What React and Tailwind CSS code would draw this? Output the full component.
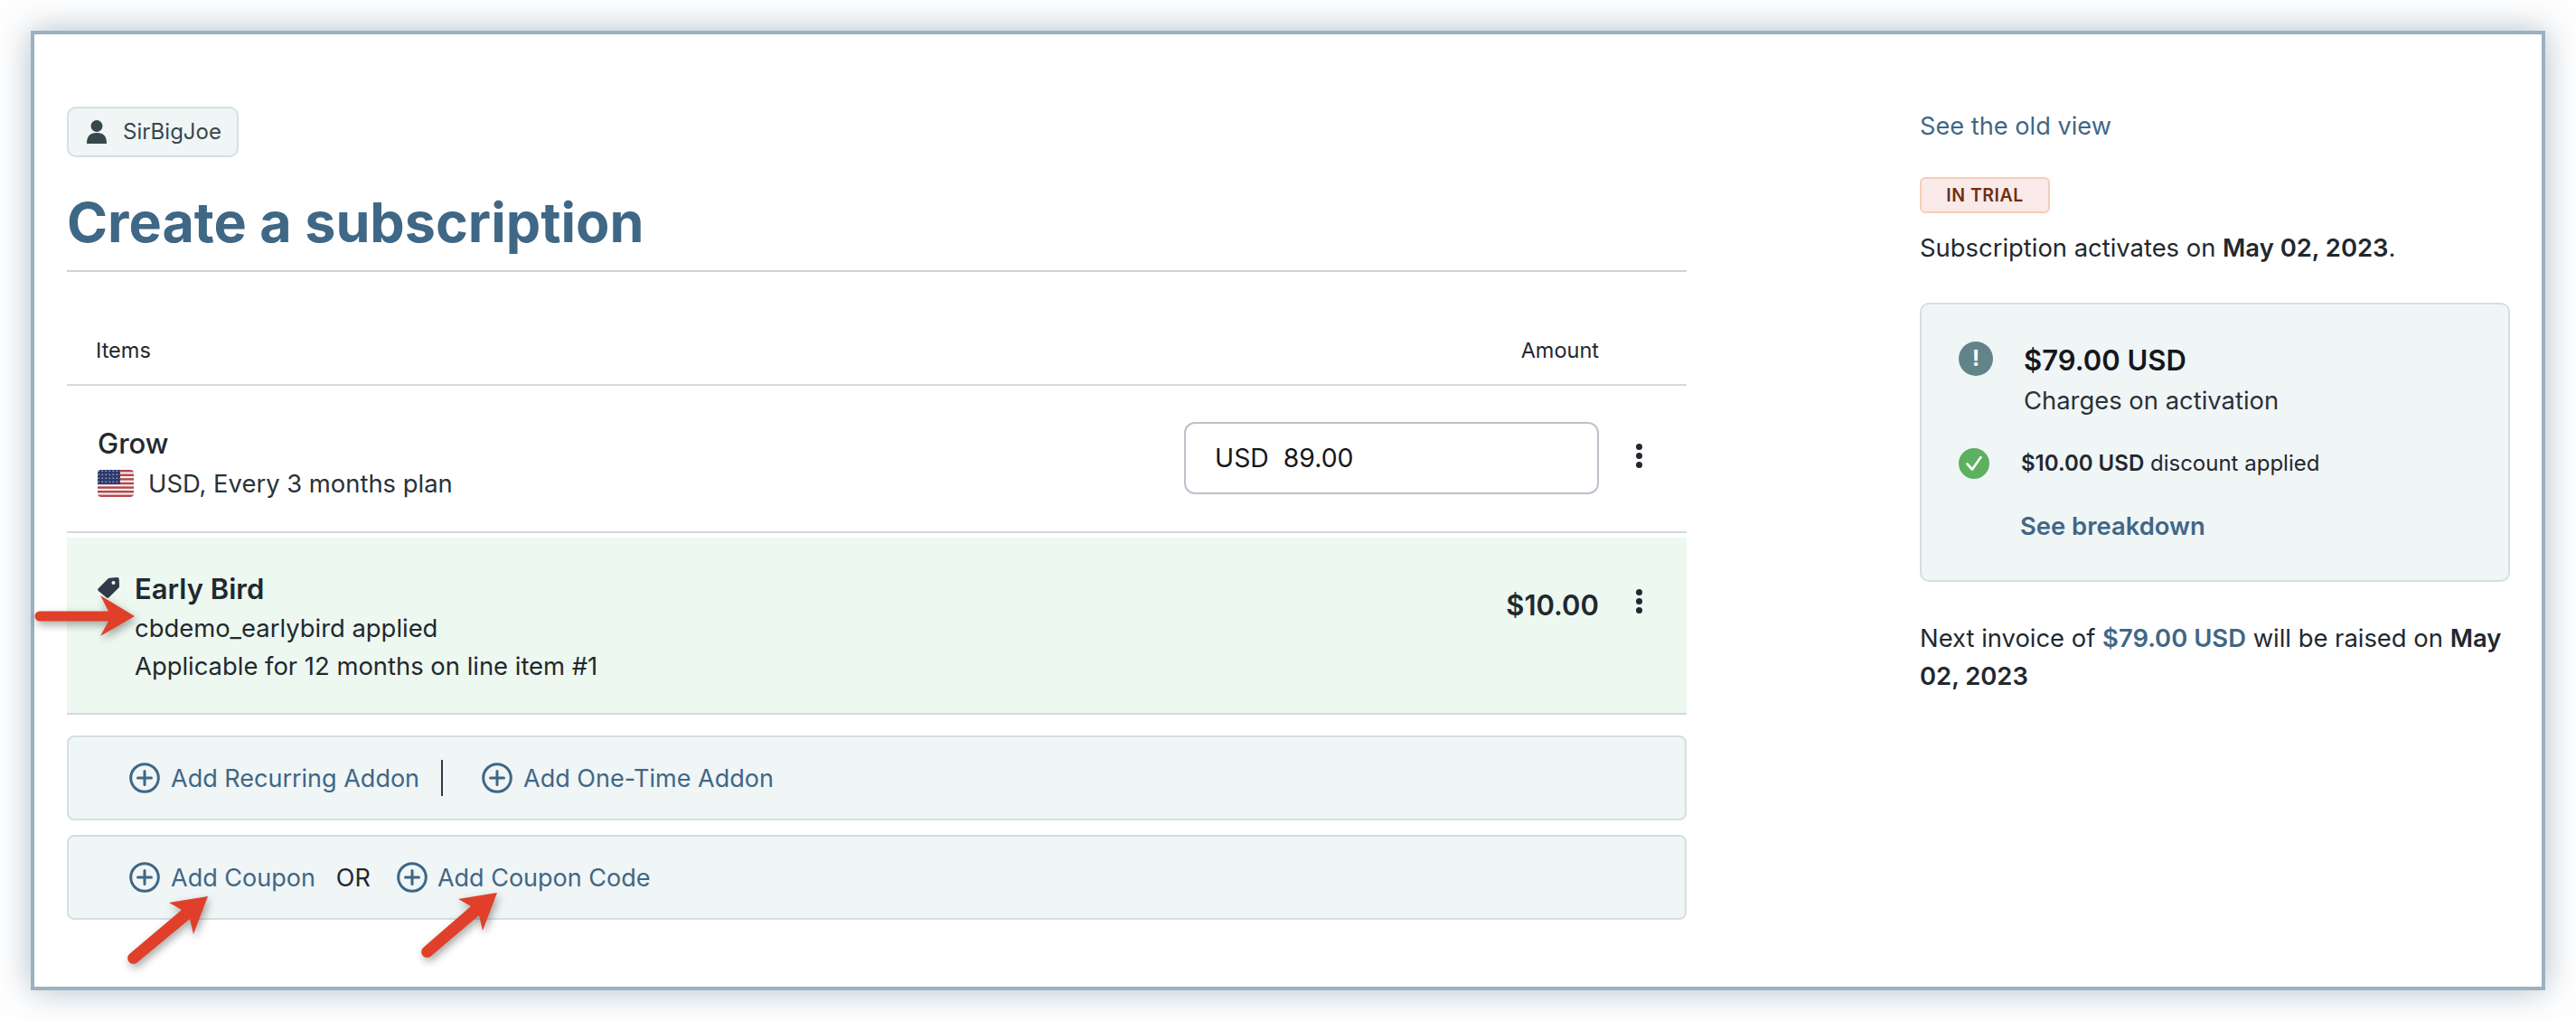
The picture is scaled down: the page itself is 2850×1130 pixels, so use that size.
import React from 'react';

const font = { fontFamily: 'Inter, "Liberation Sans", sans-serif' };

const PlusIcon = () => (
  <svg width="34" height="34" viewBox="0 0 34 34" fill="none" stroke="#3f6786" strokeWidth="3" className="shrink-0">
    <circle cx="17" cy="17" r="15.300" />
    <path d="M17 9.500v15M9.500 17h15" strokeLinecap="round" />
  </svg>
);

const Dots = () => (
  <div className="flex flex-col gap-[3px] w-[8px] items-center">
    <span className="w-[7px] h-[7px] rounded-full bg-[#22282f]" />
    <span className="w-[7px] h-[7px] rounded-full bg-[#22282f]" />
    <span className="w-[7px] h-[7px] rounded-full bg-[#22282f]" />
  </div>
);

const Flag = () => (
  <svg width="40" height="30" viewBox="0 0 40 30" className="shrink-0 rounded-[4px]">
    <defs>
      <pattern id="stars" width="4" height="4" patternUnits="userSpaceOnUse">
        <rect width="4" height="4" fill="#2d3a6e" />
        <circle cx="1.200" cy="1.200" r="0.700" fill="#d9dce8" />
      </pattern>
    </defs>
    <rect width="40" height="30" fill="#f4f0f0" />
    <rect y="0" width="40" height="2.400" fill="#b5474b" />
    <rect y="4.600" width="40" height="2.400" fill="#b5474b" />
    <rect y="9.200" width="40" height="2.400" fill="#b5474b" />
    <rect y="13.800" width="40" height="2.400" fill="#b5474b" />
    <rect y="18.400" width="40" height="2.400" fill="#b5474b" />
    <rect y="23" width="40" height="2.400" fill="#b5474b" />
    <rect y="27.600" width="40" height="2.400" fill="#b5474b" />
    <rect width="25" height="16" fill="url(#stars)" />
  </svg>
);

const Arrows = () => (
  <svg width="2850" height="1130" viewBox="0 0 2850 1130" className="absolute left-0 top-0 pointer-events-none drop-shadow-[2px_4px_5px_rgba(0,0,0,0.35)]">
    <g fill="#e03f2a">
      <path d="M44 676.500H120L111 659L149 682L111 704L120 687.500H44a5.500 5.500 0 0 1 0-11z" />
      <path d="M143 1056L201 1007L187 999L230 992L214 1034L210 1017L152 1065a6 6 0 0 1-9-9z" />
      <path d="M468 1049L521 1003L507 995L550 988L534 1030L530 1013L477 1058a6 6 0 0 1-9-9z" />
    </g>
  </svg>
);

export default function App() {
  return (
    <div style={font} className="relative w-[2850px] h-[1130px] bg-white p-[34px] text-[#22282f] overflow-hidden">
      <div className="flex h-[1062px] border-4 border-[#9bb2c0] bg-white shadow-[0_0_36px_rgba(95,125,150,0.5)] pl-[36px] pt-[80px]">
        {/* left column */}
        <div className="w-[1792px] shrink-0">
          <div className="inline-flex items-center h-[56px] w-[190px] pl-[20px] gap-[18px] border-2 border-[#d3e0e3] bg-[#f0f5f6] rounded-[10px]">
            <svg width="22" height="26" viewBox="0 0 22 26" fill="#37484d">
              <circle cx="11" cy="6.500" r="6.500" />
              <path d="M0 26c0-8 3-12 11-12s11 4 11 12z" />
            </svg>
            <span className="text-[24px] text-[#37484d]">SirBigJoe</span>
          </div>

          <h1 className="mt-[36px] text-[61px] leading-[72px] font-bold text-[#3f6786] pb-[17px] border-b-2 border-[#d0d3d6]">
            Create a subscription
          </h1>

          <div className="flex justify-between items-center h-[126px] pt-[50px] pl-[32px] pr-[97px] border-b-2 border-[#d5d9dd] text-[23.500px]">
            <span>Items</span>
            <span>Amount</span>
          </div>

          <div className="flex justify-between items-start h-[163px] pl-[34px] pr-[49px] border-b-2 border-[#d5d9dd]">
            <div className="pt-[43px]">
              <div className="text-[31px] leading-[42px] font-medium">Grow</div>
              <div className="flex items-center gap-[16px] mt-[3px] text-[27.400px] leading-[40px] text-[#2a3138]">
                <Flag />
                <span>USD, Every 3 months plan</span>
              </div>
            </div>
            <div className="flex items-start gap-[40px] pt-[40px]">
              <div className="flex items-center w-[459px] h-[80px] pl-[32px] border-2 border-[#bcc2cb] rounded-[12px] bg-white text-[28.400px] text-[#14181c] whitespace-pre">
                USD  89.00
              </div>
              <div className="pt-[24px]"><Dots /></div>
            </div>
          </div>

          <div className="mt-[5px] flex justify-between items-start h-[196px] pl-[34px] pr-[49px] bg-[#edf8f0] border-b-2 border-[#d5d9dd]">
            <div className="flex pt-[35px]">
              <svg width="25" height="23" viewBox="0 0 25 23" className="mt-[9px] mr-[16px] shrink-0">
                <path fill="#2f3a4a" d="M13 .8L21 .1a2.500 2.500 0 0 1 2.800 2.500L24 10a2 2 0 0 1-.6 1.500L12.500 22.300a2 2 0 0 1-2.800 0L.8 15a2 2 0 0 1 0-2.800L11.500 1.500a2.500 2.500 0 0 1 1.500-.7z" />
                <circle cx="17.500" cy="6" r="2" fill="#edf8f0" />
              </svg>
              <div>
                <div className="text-[31px] leading-[44px] font-semibold">Early Bird</div>
                <div className="text-[27.400px] leading-[42px]">cbdemo_earlybird applied</div>
                <div className="text-[27.400px] leading-[42px]">Applicable for 12 months on line item #1</div>
              </div>
            </div>
            <div className="flex items-start gap-[40px] pt-[50px]">
              <span className="text-[31px] leading-[44px] font-semibold mt-[3px]">$10.00</span>
              <div className="pt-[7px]"><Dots /></div>
            </div>
          </div>

          <div className="mt-[23px] flex items-center h-[94px] pl-[67px] border-2 border-[#d3e0e3] bg-[#f0f5f6] rounded-[8px] text-[27px] text-[#3f6786]">
            <PlusIcon />
            <span className="ml-[12px] mt-[2px]">Add Recurring Addon</span>
            <span className="ml-[24px] w-[2px] h-[40px] bg-[#2b3a4a]" />
            <span className="ml-[43px]"><PlusIcon /></span>
            <span className="ml-[12px] mt-[2px]">Add One-Time Addon</span>
          </div>

          <div className="mt-[16px] flex items-center h-[94px] pl-[67px] border-2 border-[#d3e0e3] bg-[#f0f5f6] rounded-[8px] text-[27px] text-[#3f6786]">
            <PlusIcon />
            <span className="ml-[12px] mt-[2px]">Add Coupon</span>
            <span className="ml-[23px] mt-[2px] text-[#22282f]">OR</span>
            <span className="ml-[29px]"><PlusIcon /></span>
            <span className="ml-[11px] mt-[2px]">Add Coupon Code</span>
          </div>
        </div>

        {/* right column */}
        <div className="ml-[258px] w-[653px] shrink-0">
          <div className="text-[27.200px] leading-[40px] mt-[2px] text-[#3f6786]">See the old view</div>
          <div className="mt-[36px] inline-flex items-center justify-center w-[144px] h-[40px] pt-[2px] border-2 border-[#f5cdb8] bg-[#f9e9e8] rounded-[6px] text-[19.500px] font-semibold tracking-[0.5px] text-[#6e2f12] align-top">
            IN TRIAL
          </div>
          <div className="mt-[17px] text-[27.400px] leading-[42px]">
            Subscription activates on <span className="font-semibold">May 02, 2023</span>.
          </div>
          <div className="mt-[40px] h-[309px] border-2 border-[#d3e0e3] bg-[#f0f5f6] rounded-[10px] pl-[41px] pt-[41px]">
            <div className="flex">
              <span className="w-[38px] h-[38px] rounded-full bg-[#628489] flex items-center justify-center text-white text-[24px] font-bold leading-none shrink-0">!</span>
              <div className="ml-[34px]">
                <div className="text-[31px] leading-[42px] font-semibold text-[#14181c]">$79.00 USD</div>
                <div className="mt-[3px] text-[27.400px] leading-[40px] text-[#2a3138]">Charges on activation</div>
              </div>
            </div>
            <div className="flex items-center mt-[33px]">
              <svg width="34" height="34" viewBox="0 0 34 34" className="shrink-0">
                <circle cx="17" cy="17" r="17" fill="#5cb05f" />
                <path d="M9.500 17.500l5.500 6L24.500 10" fill="none" stroke="#fff" strokeWidth="2.600" strokeLinecap="round" strokeLinejoin="round" />
              </svg>
              <div className="ml-[35px] text-[24px] leading-[34px]">
                <span className="font-semibold">$10.00 USD</span> discount applied
              </div>
            </div>
            <div className="ml-[68px] mt-[32px] text-[27.400px] leading-[40px] font-semibold text-[#3f6786]">See breakdown</div>
          </div>
          <div className="mt-[41px] text-[27.400px] leading-[42px]">
            Next invoice of <span className="font-semibold text-[#3f6786]">$79.00 USD</span> will be raised on <span className="font-semibold">May 02, 2023</span>
          </div>
        </div>
      </div>
      <Arrows />
    </div>
  );
}
